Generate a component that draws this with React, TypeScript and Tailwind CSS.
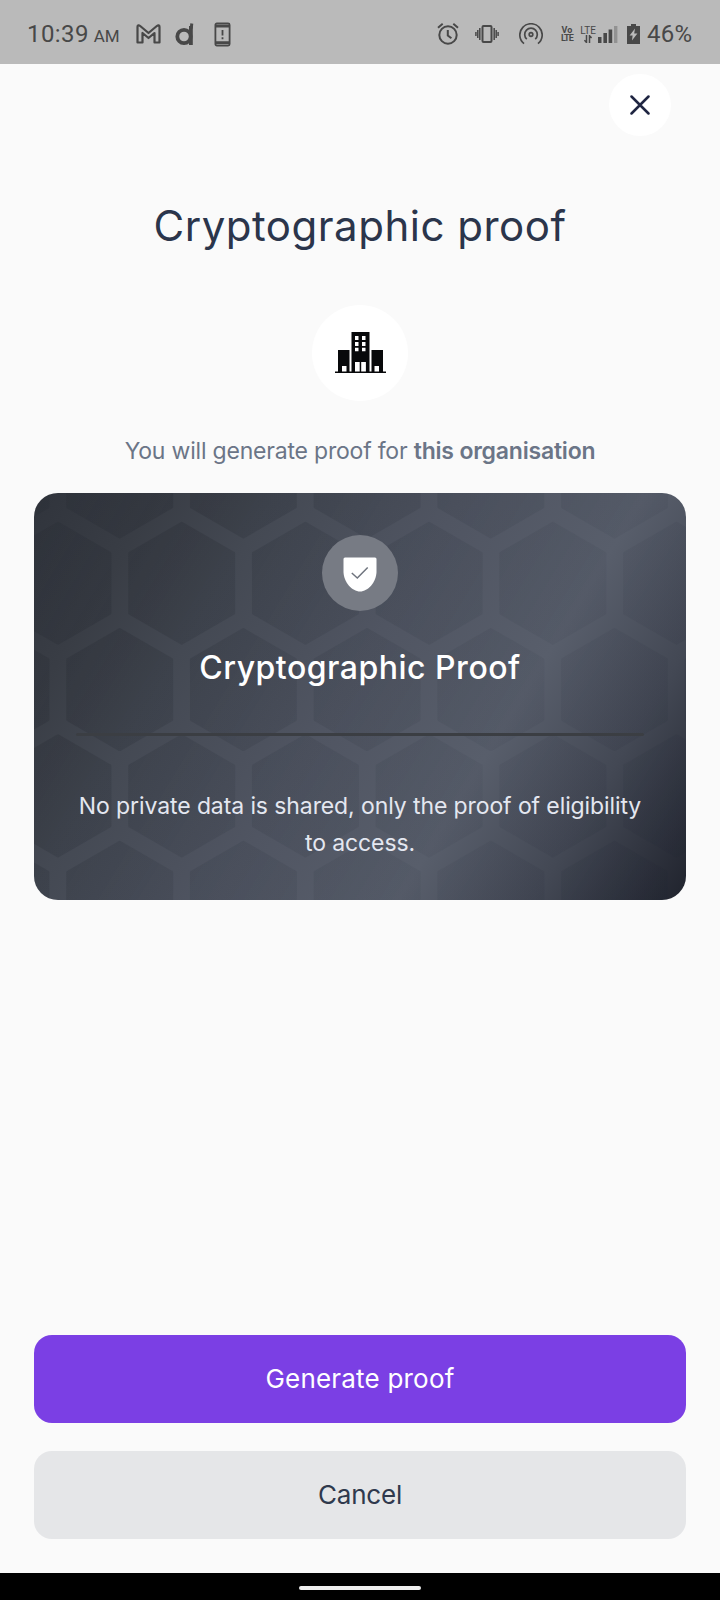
import type { ReactNode } from 'react'

const HEX_RADIUS = 60
const HEX_PITCH_X = 123.7
const HEX_PITCH_Y = 106.3

function hexPoints(cx: number, cy: number) {
  const half = HEX_RADIUS * 0.866
  const side = HEX_RADIUS / 2
  return [
    [cx, cy - HEX_RADIUS],
    [cx + half, cy - side],
    [cx + half, cy + side],
    [cx, cy + HEX_RADIUS],
    [cx - half, cy + side],
    [cx - half, cy - side],
  ]
    .map((p) => p.join(','))
    .join(' ')
}

// Odd rows start on the left edge, even rows are shifted by half a cell
const HEXES = [0, 1, 2, 3, 4].flatMap((row) =>
  [0, 1, 2, 3, 4, 5, 6].map((col) => ({
    cx: (row % 2 ? 24 : -38) + col * HEX_PITCH_X,
    cy: -16 + row * HEX_PITCH_Y,
  })),
)

function HoneycombBackground() {
  return (
    <svg className="absolute inset-0 h-full w-full" viewBox="0 0 652 407" preserveAspectRatio="none">
      <defs>
        <linearGradient id="base" gradientUnits="userSpaceOnUse" x1="0" y1="0" x2="657" y2="400">
          <stop offset="0" stopColor="#30343c" />
          <stop offset="0.14" stopColor="#393d45" />
          <stop offset="0.27" stopColor="#444953" />
          <stop offset="0.48" stopColor="#505562" />
          <stop offset="0.68" stopColor="#585e6b" />
          <stop offset="0.83" stopColor="#434854" />
          <stop offset="1" stopColor="#20232d" />
        </linearGradient>
        <linearGradient id="cell" gradientUnits="userSpaceOnUse" x1="0" y1="0" x2="657" y2="400">
          <stop offset="0" stopColor="#242830" stopOpacity="0.18" />
          <stop offset="0.2" stopColor="#242830" stopOpacity="0.26" />
          <stop offset="0.4" stopColor="#2a303a" stopOpacity="0.17" />
          <stop offset="0.68" stopColor="#303845" stopOpacity="0.09" />
          <stop offset="1" stopColor="#1d2130" stopOpacity="0.14" />
        </linearGradient>
        {/* The stroke in the mask rounds the corners of every cell */}
        <mask id="cells" maskUnits="userSpaceOnUse" x="0" y="0" width="652" height="407">
          {HEXES.map((h) => (
            <polygon
              key={`${h.cx}-${h.cy}`}
              points={hexPoints(h.cx, h.cy)}
              fill="#fff"
              stroke="#fff"
              strokeWidth="3"
              strokeLinejoin="round"
            />
          ))}
        </mask>
      </defs>
      <rect width="652" height="407" fill="url(#base)" />
      <rect width="652" height="407" fill="url(#cell)" mask="url(#cells)" />
    </svg>
  )
}

function StatusBar() {
  return (
    <header className="flex h-16 items-center bg-[#bababa] pt-1 pl-[27px] font-['Roboto',sans-serif] text-[#484848]">
      <div className="flex w-[92px] items-baseline gap-[5px] whitespace-nowrap">
        <span className="text-2xl tracking-[0.4px]">10:39</span>
        <span className="text-[17px]">AM</span>
      </div>

      {/* Gmail */}
      <svg className="ml-[17px]" width="25" height="20" viewBox="0 0 25 20" fill="none" stroke="currentColor" strokeWidth="2.2" strokeLinejoin="round">
        <path d="M1.5 18.5V2.8C1.5 1 2.8.9 4.2 2l8.3 7 8.3-7c1.4-1.1 2.7-1 2.7.8v15.7h-5V9l-6 5-6-5v9.5z" />
      </svg>
      {/* Stylised "d" app mark */}
      <svg className="ml-[14px]" width="19" height="23" viewBox="0 0 19 23" fill="none" stroke="currentColor" strokeWidth="3.8">
        <circle cx="9" cy="13.5" r="6.7" />
        <path d="M15.9 3v19" />
        <path d="M16.8.5l-.6 5" strokeWidth="3" />
      </svg>
      {/* Phone alert */}
      <svg className="ml-[20px]" width="17" height="25" viewBox="0 0 17 25" fill="none" stroke="currentColor">
        <rect x="1.4" y="1.4" width="14.2" height="22.2" rx="1.5" strokeWidth="1.8" />
        <path d="M1.4 4h14.2M1.4 20.8h14.2" strokeWidth="3" />
        <path d="M8.5 8v5.5M8.5 15.2v2" strokeWidth="1.8" />
      </svg>

      {/* Alarm */}
      <svg className="ml-[206px]" width="22" height="22" viewBox="0 0 22 22" fill="none" stroke="currentColor" strokeWidth="2">
        <circle cx="11" cy="12" r="8.7" />
        <path d="M10.8 7v5.5l3.6 2.8M1 4.7L5.7.8M21 4.7L16.3.8" />
      </svg>
      {/* Vibrate */}
      <svg className="ml-4" width="24" height="18" viewBox="0 0 24 18" fill="none" stroke="currentColor" strokeWidth="2">
        <rect x="7.5" y="1" width="9" height="16" rx="1" />
        <path d="M4.8 3v12M19.2 3v12M2.8 5v8M21.2 5v8M.9 7v4M23.1 7v4" strokeWidth="1.5" />
      </svg>
      {/* Hotspot */}
      <svg className="ml-5" width="24" height="22" viewBox="0 0 24 22" fill="none" stroke="currentColor" strokeWidth="1.7">
        <circle cx="12" cy="11.5" r="1.8" />
        <path d="M7.8 16.2a6.3 6.3 0 1 1 8.4 0" />
        <path d="M5 20.700a11.200 11.200 0 1 1 14 0" />
      </svg>
      <div className="ml-[18px] flex w-3 flex-col items-center text-[9px] leading-[8px] font-bold">
        <span>Vo</span>
        <span className="tracking-[-0.8px]">LTE</span>
      </div>
      <div className="ml-[6px] flex w-[18px] flex-col items-center text-[10px] leading-[9px]">
        <span>LTE</span>
        <svg width="8" height="8" viewBox="0 0 8 8" fill="none" stroke="currentColor" strokeWidth="1.5">
          <path d="M2.5 0v7.5L.4 5.2M5.5 8V.7l2.1 2.2" />
        </svg>
      </div>
      {/* Signal strength */}
      <svg className="ml-px" width="20" height="17" viewBox="0 0 20 17" fill="currentColor">
        <path d="M0 11h3.500v6H0zM5.400 7H9v10H5.400zM10.600 3.500h3.600V17h-3.600z" />
        <path d="M16 0h3.400v17H16z" opacity="0.35" />
      </svg>
      {/* Charging battery */}
      <svg className="ml-[9px]" width="13" height="20" viewBox="0 0 13 20">
        <path d="M4 0h5v2h4v18H0V2h4z" fill="currentColor" />
        <path d="M8 4.5 2.6 11.5h3L5 16.5l5.4-7H7.2z" fill="#bababa" />
      </svg>
      <span className="ml-[7px] text-2xl tracking-[0.2px]">46%</span>
    </header>
  )
}

function BuildingIcon() {
  return (
    <svg width="51" height="42" viewBox="0 0 51 42">
      <path
        fill="#08090b"
        fillRule="evenodd"
        d="M0 39.5h3V18h11.5v21.5h2V0h18v39.5h2V18H48v21.5h3V41H0zM20 4v4h3.5V4zM27 4v4h3.5V4zM20 10v4h3.5v-4zM27 10v4h3.5v-4zM20 15.8v3.5h3.5v-3.5zM27 15.8v3.5h3.5v-3.5zM20 30v9.5h4.7V30zM26.2 30v9.5h4.7V30zM7 34v5.5h4.5V34zM39.5 34v5.5H44V34z"
      />
    </svg>
  )
}

function ShieldIcon() {
  return (
    <svg className="mt-[3px]" width="34" height="35" viewBox="0 0 34 35" fill="none">
      <path d="M2 .5h30q1.500 0 1.500 1.500v12.500C33.500 25 25 34.500 17 34.500S.5 25 .5 14.500V2Q.5.500 2 .5z" fill="#fff" />
      <path d="M8.800 16l5.500 5L24.700 10.500" stroke="#6f747e" strokeWidth="1.5" />
    </svg>
  )
}

function ActionButton({ className, children }: { className: string; children: ReactNode }) {
  return (
    <button className={`flex h-22 w-full items-center justify-center rounded-[18px] pb-0.5 text-[26px] ${className}`}>
      {children}
    </button>
  )
}

export default function App() {
  return (
    <div className="flex h-[1600px] w-[720px] flex-col overflow-hidden bg-[#fafafa] font-['Inter',sans-serif]">
      <StatusBar />

      <main className="flex flex-1 flex-col px-[34px]">
        <div className="flex justify-end pt-2.5 pr-[15px]">
          <button className="flex size-[62px] items-center justify-center rounded-full bg-white" aria-label="Close">
            <svg width="20" height="20" viewBox="0 0 20 20" stroke="#1f2542" strokeWidth="2.5" strokeLinecap="round">
              <path d="M1.5 1.5l17 17M18.5 1.5l-17 17" />
            </svg>
          </button>
        </div>

        <h1 className="mt-[64px] text-center text-[42px] leading-[52px] tracking-[0.5px] whitespace-nowrap text-[#2b354b]">
          Cryptographic proof
        </h1>

        <div className="mt-[53px] flex size-24 items-center justify-center self-center rounded-full bg-white">
          <BuildingIcon />
        </div>

        <p className="mt-[34px] text-center text-[23px] leading-8 tracking-[-0.2px] whitespace-nowrap text-[#6b7587]">
          You will generate proof for <b className="font-semibold">this organisation</b>
        </p>

        <section className="relative mt-[26px] h-[407px] overflow-hidden rounded-3xl">
          <HoneycombBackground />
          <div className="relative flex flex-col items-center pt-[42px]">
            <div className="flex size-[76px] items-center justify-center rounded-full bg-[#777b84]">
              <ShieldIcon />
            </div>
            <h2 className="mt-[37px] text-[32px] leading-10 font-medium tracking-[0.5px] whitespace-nowrap text-white">
              Cryptographic Proof
            </h2>
            <div className="mt-[45px] h-[3px] w-[568px] rounded-full bg-[#3b3e43]" />
            <p className="mt-[52px] text-center text-[23px] leading-[37px] tracking-[-0.1px] whitespace-nowrap text-[#e4e7f0]">
              No private data is shared, only the proof of eligibility
              <br />
              to access.
            </p>
          </div>
        </section>

        <div className="mt-auto flex flex-col gap-7 pb-[34px]">
          <ActionButton className="bg-[#7b3fe4] tracking-[0.2px] text-white">Generate proof</ActionButton>
          <ActionButton className="bg-[#e5e6e8] tracking-[-0.2px] text-[#2f394d]">Cancel</ActionButton>
        </div>
      </main>

      <footer className="flex h-[27px] justify-center bg-black pt-[13px]">
        <div className="h-1 w-[122px] rounded-full bg-[#eeeeee]" />
      </footer>
    </div>
  )
}
